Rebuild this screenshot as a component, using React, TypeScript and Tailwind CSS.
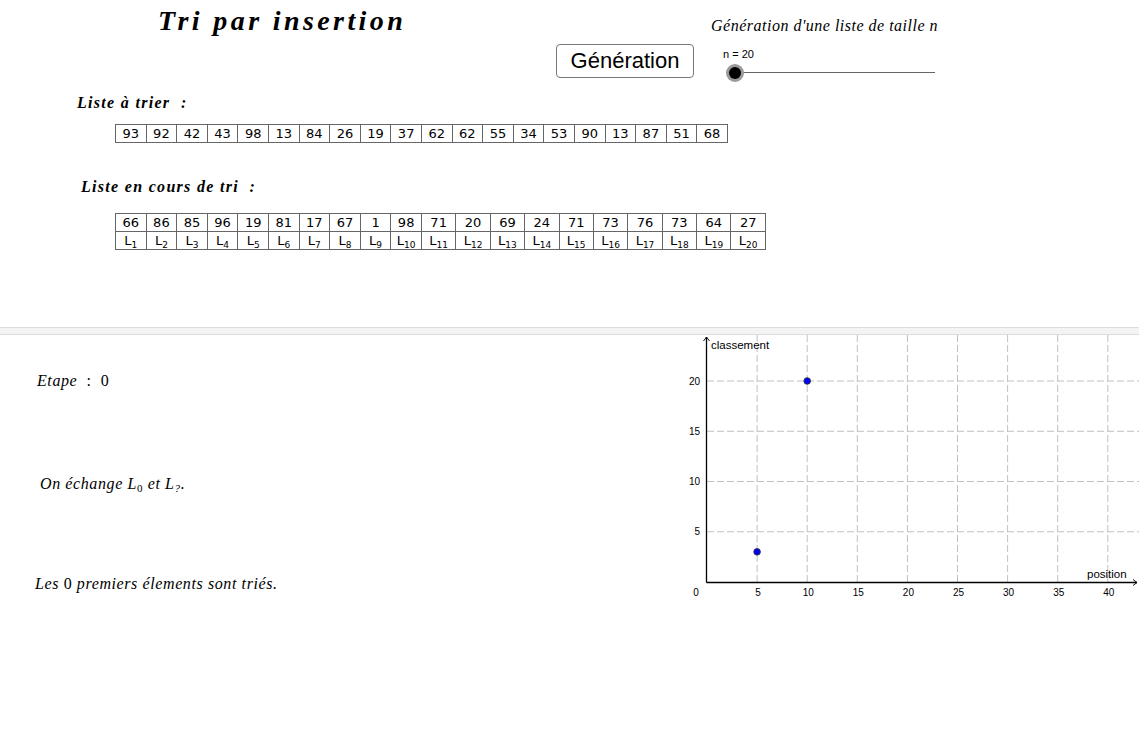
import React from 'react';

const toSort = [93, 92, 42, 43, 98, 13, 84, 26, 19, 37, 62, 62, 55, 34, 53, 90, 13, 87, 51, 68];
const inProgress = [66, 86, 85, 96, 19, 81, 17, 67, 1, 98, 71, 20, 69, 24, 71, 73, 76, 73, 64, 27];

const serif = { fontFamily: '"Liberation Serif", "DejaVu Serif", serif' };
const sans = { fontFamily: '"DejaVu Sans", "Liberation Sans", sans-serif' };
const arial = { fontFamily: '"Liberation Sans", Arial, sans-serif' };

const colW = (i: number, wide: boolean) => (wide && i >= 10 ? 34.4 : 30.6);

function Row({ values, wide }: { values: React.ReactNode[]; wide: boolean }) {
  return (
    <div className="flex">
      {values.map((v, i) => (
        <div
          key={i}
          className="h-[18px] shrink-0 border-r border-b border-[#666] flex items-center justify-center text-[13px] leading-none text-black"
          style={{ width: colW(i, wide) }}
        >
          {v}
        </div>
      ))}
    </div>
  );
}

function Chart() {
  const X = (v: number) => 37 + v * 10.02;
  const Y = (v: number) => 247 - v * 10.05;
  const xs = [5, 10, 15, 20, 25, 30, 35, 40];
  const ys = [5, 10, 15, 20];
  return (
    <svg width="469" height="401" viewBox="0 0 469 401" className="block" style={arial}>
      {xs.map((v) => (
        <line key={'gx' + v} x1={X(v)} y1={0} x2={X(v)} y2={247} stroke="#c0c0c0" strokeDasharray="7 3" />
      ))}
      {ys.map((v) => (
        <line key={'gy' + v} x1={37} y1={Y(v)} x2={469} y2={Y(v)} stroke="#c0c0c0" strokeDasharray="7 3" />
      ))}
      {/* axes */}
      <line x1={36.5} y1={2} x2={36.5} y2={247.5} stroke="#000" strokeWidth="1.3" />
      <line x1={36.5} y1={247.5} x2={467} y2={247.5} stroke="#000" strokeWidth="1.3" />
      <path d="M33.5 6 L36.5 2 L39.5 6" fill="none" stroke="#000" strokeWidth="0.9" />
      <path d="M463 244.5 L467 247.5 L463 250.5" fill="none" stroke="#000" strokeWidth="0.9" />
      {xs.map((v) => (
        <text key={'lx' + v} x={X(v) + 1} y={261} fontSize="10" textAnchor="middle" fill="#000">
          {v}
        </text>
      ))}
      <text x={26} y={261} fontSize="10" textAnchor="middle" fill="#000">0</text>
      {ys.map((v) => (
        <text key={'ly' + v} x={30} y={Y(v) + 3.5} fontSize="10" textAnchor="end" fill="#000">
          {v}
        </text>
      ))}
      <text x={41} y={14} fontSize="11.5" fill="#000">classement</text>
      <text x={417} y={243} fontSize="11.5" fill="#000">position</text>
      <circle cx={X(5)} cy={Y(3)} r={3.3} fill="#0000ff" stroke="#333" strokeWidth="0.9" />
      <circle cx={X(10)} cy={Y(20)} r={3.3} fill="#0000ff" stroke="#333" strokeWidth="0.9" />
    </svg>
  );
}

export default function App() {
  return (
    <div className="w-[1139px] h-[736px] bg-white overflow-hidden flex flex-col text-black">
      {/* top panel */}
      <div className="h-[327px] shrink-0">
        <div className="flex">
          <div className="w-[556px] shrink-0 pl-[158px] pt-[4px]">
            <div className="text-[28px] font-bold italic leading-[34px] tracking-[3.4px]" style={serif}>
              Tri par insertion
            </div>
          </div>
          <div className="flex flex-col">
            <div className="pl-[155px] pt-[16px] text-[16px] italic leading-[20px] tracking-[0.5px]" style={serif}>
              Génération d'une liste de taille n
            </div>
            <div className="flex mt-[8px]">
              <button
                className="w-[138px] h-[34px] border border-[#777] rounded-[4px] bg-white text-[22px] leading-none flex items-center justify-center"
                style={arial}
              >
                Génération
              </button>
              <div className="ml-[29px] flex flex-col pt-[4px]">
                <div className="text-[11px] leading-[13px]" style={arial}>n = 20</div>
                <div className="relative w-[212px] h-[18px] mt-[3px]">
                  <div className="absolute left-[12px] right-0 top-[8px] h-px bg-[#666]" />
                  <div className="absolute left-[3px] top-0 w-[18px] h-[18px] rounded-full bg-[#9a9a9a]" />
                  <div className="absolute left-[6px] top-[3px] w-[12px] h-[12px] rounded-full bg-black" />
                </div>
              </div>
            </div>
          </div>
        </div>

        <div className="pl-[77px] mt-[12px] text-[16px] font-bold italic leading-[18px] tracking-[1.3px]" style={serif}>
          Liste à trier&nbsp; :
        </div>
        <div className="ml-[115px] mt-[12px] inline-flex flex-col border-l border-t border-[#666]" style={sans}>
          <Row values={toSort} wide={false} />
        </div>

        <div className="pl-[81px] mt-[34px] text-[16px] font-bold italic leading-[18px] tracking-[1.3px]" style={serif}>
          Liste en cours de tri&nbsp; :
        </div>
        <div className="ml-[115px] mt-[17px] inline-flex flex-col border-l border-t border-[#666]" style={sans}>
          <Row values={inProgress} wide />
          <Row
            values={inProgress.map((_, i) => (
              <span key={i} className="flex items-baseline">
                <span className="text-[13px]">L</span>
                <span className="text-[9px] relative top-[3px]">{i + 1}</span>
              </span>
            ))}
            wide
          />
        </div>
      </div>

      {/* divider */}
      <div className="h-[8px] shrink-0 bg-[#f4f4f4] border-t border-b border-[#dcdcdc]" />

      {/* bottom panel */}
      <div className="flex-1 flex">
        <div className="w-[670px] shrink-0 flex flex-col text-[16px] leading-[18px] tracking-[0.6px]" style={serif}>
          <div className="pl-[37px] mt-[37px]">
            <span className="italic">Etape</span>&nbsp; : &nbsp;0
          </div>
          <div className="pl-[40px] mt-[85px] italic">
            On échange L<sub className="not-italic text-[11px]">0</sub> et L<sub className="text-[11px]">?</sub>.
          </div>
          <div className="pl-[35px] mt-[82px]">
            <span className="italic">Les</span> 0 <span className="italic">premiers élements sont triés.</span>
          </div>
        </div>
        <Chart />
      </div>
    </div>
  );
}
